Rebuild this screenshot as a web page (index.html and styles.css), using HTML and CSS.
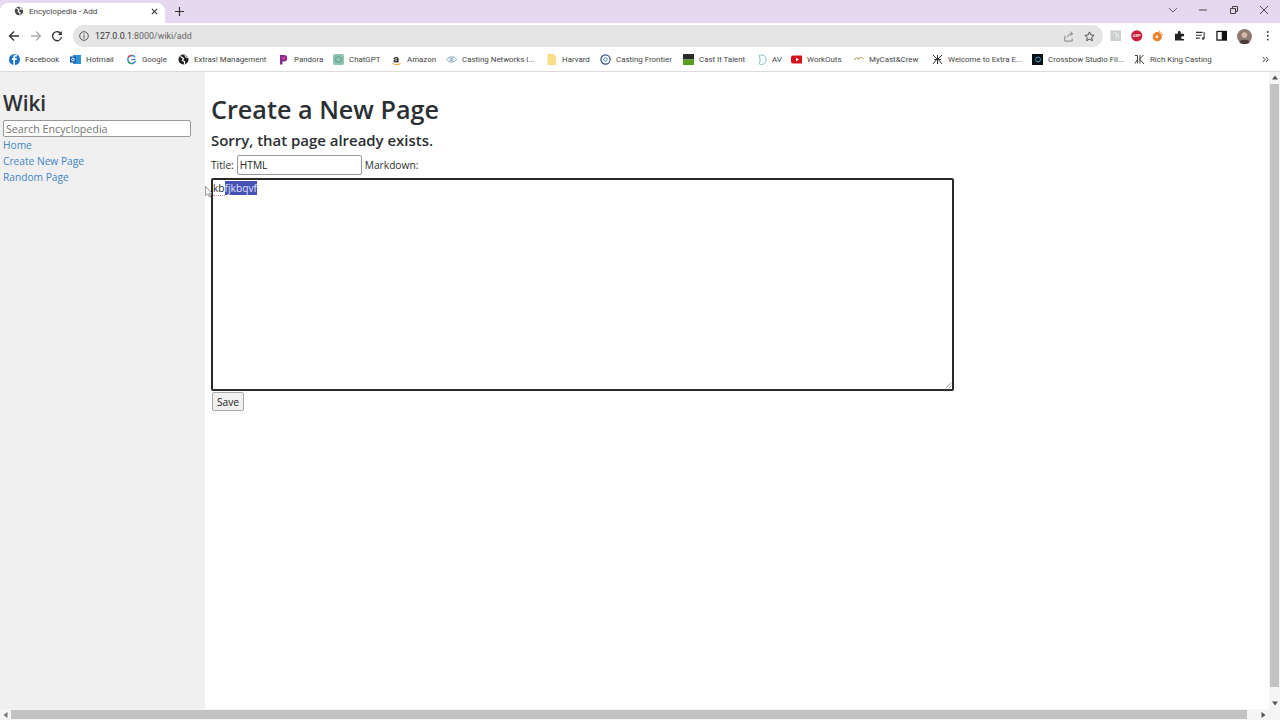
FILE: index.html
```html
<!DOCTYPE html>
<html lang="en">
  <head>
    <meta charset="UTF-8" />
    <title>Encyclopedia - Add</title>
    <link rel="stylesheet" href="styles.css">
  </head>
  <body>
    <div class="tabstrip">
      <div class="tab">
        <svg class="tab-icon" viewBox="0 0 12 12"><circle cx="6" cy="6" r="5" fill="#444"/><path d="M3 2.500l3 2-1 2.500 2 1v2.500M7 1.500l1 2 2.500.5" stroke="#fff" stroke-width="1.400" fill="none"/></svg>
        <span class="tab-title">Encyclopedia - Add</span>
        <svg class="tab-close" viewBox="0 0 8 8"><path d="M1 1l6 6M7 1l-6 6" stroke="#333" stroke-width="1.200"/></svg>
      </div>
      <svg class="new-tab" viewBox="0 0 10 10"><path d="M5 0v10M0 5h10" stroke="#333" stroke-width="1.300"/></svg>
      <div class="window-controls">
        <svg viewBox="0 0 10 10"><path d="M1 3l4 4 4-4" stroke="#666" fill="none"/></svg>
        <svg viewBox="0 0 10 10"><path d="M1 5h8" stroke="#444"/></svg>
        <svg viewBox="0 0 10 10"><path d="M1.500 3.500h5v5h-5zM3.500 3.500v-2h5v5h-2" stroke="#444" fill="none"/></svg>
        <svg viewBox="0 0 10 10"><path d="M1 1l8 8M9 1l-8 8" stroke="#444"/></svg>
      </div>
    </div>

    <div class="toolbar">
      <svg class="nav-icon" viewBox="0 0 12 12"><path d="M11 6H2M6 1.500L1.500 6 6 10.500" stroke="#333" stroke-width="1.300" fill="none"/></svg>
      <svg class="nav-icon" viewBox="0 0 12 12"><path d="M1 6h9M6 1.500L10.500 6 6 10.500" stroke="#aaa" stroke-width="1.300" fill="none"/></svg>
      <svg class="nav-icon" viewBox="0 0 12 12"><path d="M10 4a4.500 4.500 0 1 0 .5 3" stroke="#333" stroke-width="1.300" fill="none"/><path d="M10.800 1v4h-4z" fill="#333"/></svg>
      <div class="omnibox">
        <svg class="info-icon" viewBox="0 0 10 10"><circle cx="5" cy="5" r="4.300" stroke="#555" fill="none"/><path d="M5 4.300V7.500M5 2.300v1.200" stroke="#555"/></svg>
        <span class="url">127.0.0.1<span class="url-dim">:8000/wiki/add</span></span>
        <svg class="omni-icon share" viewBox="0 0 12 12"><path d="M2 5v6h8V8M5 7c0-2.500 2-4 5-4M8 .8L10.500 3 8 5.300" stroke="#777" fill="none"/></svg>
        <svg class="omni-icon" viewBox="0 0 12 12"><path d="M6 1l1.500 3.300 3.500.4-2.600 2.400.7 3.500L6 8.800l-3.100 1.800.7-3.500L1 4.700l3.500-.4z" stroke="#444" fill="none"/></svg>
      </div>
      <div class="extensions">
        <svg viewBox="0 0 12 12"><rect width="11" height="11" x=".5" y=".5" fill="#c9cfcf"/><path d="M3.500 3h3v6M6.500 5h2.500v4" stroke="#eee" fill="none"/></svg>
        <svg viewBox="0 0 12 12"><circle cx="6" cy="6" r="5.800" fill="#c8203f"/><text class="abp" x="6" y="7.500">ABP</text></svg>
        <svg viewBox="0 0 12 12"><circle cx="5.500" cy="7" r="4.800" fill="#e8812c"/><path d="M7.500 .8l.5 1.700M10 1.800L9 3.200M11.500 4.500L9.800 4.800" stroke="#e8903c"/><circle cx="5" cy="7" r="1.600" fill="#fbe3c8"/></svg>
        <svg viewBox="0 0 12 12"><path d="M1 4h3V2.500a1.500 1.500 0 0 1 3 0V4h3.500v2.500H9a1.500 1.500 0 0 0 0 3h1.500V11H1z" fill="#222"/></svg>
        <svg viewBox="0 0 12 12"><path d="M1 2.500h7M1 5.500h6M1 8.500h4" stroke="#333" stroke-width="1.100"/><path d="M9.500 2v6.500" stroke="#333" stroke-width="1.100"/><circle cx="8.500" cy="8.800" r="1.300" fill="#333"/></svg>
        <svg viewBox="0 0 12 12"><rect x="1" y="1.500" width="10" height="9" stroke="#111" stroke-width="1.300" fill="#fff"/><rect x="6" y="1.500" width="5" height="9" fill="#111"/></svg>
        <svg class="avatar" viewBox="0 0 16 16"><circle cx="8" cy="8" r="8" fill="#8d7a70"/><circle cx="8" cy="6.500" r="3" fill="#d8b8a6"/><path d="M2.500 14c1-3.500 10-3.500 11 0a8 8 0 0 1-11 0z" fill="#4d3d3a"/></svg>
        <svg viewBox="0 0 12 12"><circle cx="6" cy="2" r="1" fill="#333"/><circle cx="6" cy="6" r="1" fill="#333"/><circle cx="6" cy="10" r="1" fill="#333"/></svg>
      </div>
    </div>

    <div class="bookmarks">
      <a class="bookmark" style="width: 61px"><svg viewBox="0 0 11 11"><circle cx="5.500" cy="5.500" r="5.500" fill="#1b74c5"/><path d="M6 11V6h1.600l.2-1.800H6V3.300c0-.6.300-.9 1-.9h.9V.8H6.500C5 .8 4.300 1.800 4.300 3v1.200H3V6h1.300v5z" fill="#fff"/></svg>Facebook</a>
      <a class="bookmark" style="width: 56px"><svg viewBox="0 0 11 11"><rect x="3" y="1" width="8" height="9" fill="#2d8fd5"/><rect y="2.500" width="6" height="6" fill="#0f5ea8"/><circle cx="3" cy="5.500" r="1.400" stroke="#fff" fill="none"/></svg>Hotmail</a>
      <a class="bookmark" style="width: 52px"><svg viewBox="0 0 11 11"><path d="M9 3A4 4 0 1 0 9.500 7" stroke="#3a7de0" stroke-width="1.400" fill="none"/><path d="M5.500 5.500h4" stroke="#3a7de0" stroke-width="1.400"/><path d="M2 3.300A4 4 0 0 1 5.500 1.500" stroke="#d8503e" stroke-width="1.400" fill="none"/><path d="M2 7.800a4 4 0 0 0 4 1.700" stroke="#3fa85a" stroke-width="1.400" fill="none"/></svg>Google</a>
      <a class="bookmark" style="width: 100px"><svg viewBox="0 0 11 11"><circle cx="5.500" cy="5.500" r="5" fill="#222"/><path d="M2.500 2.500l3 2-1 2 2 1v2.500M7 1l1 2 2 .5" stroke="#fff" stroke-width="1.200" fill="none"/></svg>Extras! Management</a>
      <a class="bookmark" style="width: 55px"><svg viewBox="0 0 11 11"><path d="M2 1h4a3.200 3.200 0 0 1 0 6.500H4.500V10.500H2z" fill="#8a2c8f"/><path d="M4.500 3h1.300a1.200 1.200 0 0 1 0 2.500H4.500z" fill="#d44aa0"/></svg>Pandora</a>
      <a class="bookmark" style="width: 58px"><svg viewBox="0 0 11 11"><rect width="11" height="11" rx="2" fill="#8fc4b0"/><circle cx="5.500" cy="5.500" r="3" stroke="#5e9e88" fill="none"/></svg>ChatGPT</a>
      <a class="bookmark" style="width: 55px"><svg viewBox="0 0 11 11"><path d="M3 5c1-2 4-1.500 4 0v3.500M7 5.500C4 5.500 3 6 3 7s2 1.500 4 0" stroke="#222" stroke-width="1.200" fill="none"/><path d="M1.500 9.500c2.500 1.400 6 1.400 8 0" stroke="#e89a20" fill="none"/></svg>Amazon</a>
      <a class="bookmark" style="width: 100px"><svg viewBox="0 0 11 11"><path d="M.5 5.500C3 2 8 2 10.500 5.500 8 9 3 9 .5 5.500z" stroke="#7fa7bb" fill="none"/><circle cx="5.500" cy="5.500" r="2" fill="#a6c2cf"/></svg>Casting Networks l...</a>
      <a class="bookmark" style="width: 54px"><svg viewBox="0 0 11 11"><path d="M1.500 0h6L10 2.500V11H1.500z" fill="#f8de88"/></svg>Harvard</a>
      <a class="bookmark" style="width: 83px"><svg viewBox="0 0 11 11"><circle cx="5.500" cy="5.500" r="4.600" stroke="#35517f" stroke-width="1.200" fill="#fff"/><circle cx="5.500" cy="5.500" r="1.800" stroke="#5a8ab8" fill="none"/></svg>Casting Frontier</a>
      <a class="bookmark" style="width: 73px"><svg viewBox="0 0 11 11"><rect width="11" height="5.500" fill="#2b2b2b"/><rect y="5.500" width="11" height="5.500" fill="#5a9e20"/></svg>Cast It Talent</a>
      <a class="bookmark" style="width: 35px"><svg viewBox="0 0 11 11"><path d="M3 1.500c4-1.500 8 1 7 5s-5 5-7 3c1.500-2 1.500-5 0-8z" stroke="#7cc0c0" fill="none"/></svg>AV</a>
      <a class="bookmark" style="width: 62px"><svg viewBox="0 0 11 11"><rect y="1.500" width="12" height="8" rx="2" fill="#d4121c"/><path d="M5 3.700l3 1.800-3 1.800z" fill="#fff"/></svg>WorkOuts</a>
      <a class="bookmark" style="width: 79px"><svg viewBox="0 0 11 11"><path d="M1 6c2-3 4-3 5 0M5 5c2-2 4-2 5.500 0" stroke="#b8a060" stroke-width="1.200" fill="none"/></svg>MyCast&amp;Crew</a>
      <a class="bookmark" style="width: 100px"><svg viewBox="0 0 11 11"><path d="M1 1l4 4-4 5M10 1L6 5l4 5M2 5.500h7M5.500 1v9" stroke="#333" fill="none"/></svg>Welcome to Extra E...</a>
      <a class="bookmark" style="width: 102px"><svg viewBox="0 0 11 11"><rect width="11" height="11" fill="#0a0f14"/><circle cx="6" cy="5.500" r="2.500" stroke="#3aa0c0" fill="none"/></svg>Crossbow Studio Fil...</a>
      <a class="bookmark" style="width: 77px"><svg viewBox="0 0 11 11"><path d="M1 1.500h2.500v8M3.500 5.500L1 9.500M9.500 1L5.500 5l4.500 5M6 1v8.500" stroke="#444" fill="none"/></svg>Rich King Casting</a>
      <svg class="more" viewBox="0 0 8 8"><path d="M1 1l2.500 3L1 7M4.500 1L7 4 4.500 7" stroke="#333" fill="none"/></svg>
    </div>

    <div class="viewport">
      <div class="sidebar">
        <h2>Wiki</h2>
        <input class="search" type="text" placeholder="Search Encyclopedia">
        <div><a href="#">Home</a></div>
        <div><a href="#">Create New Page</a></div>
        <div><a href="#">Random Page</a></div>
      </div>
      <div class="main">
        <h1>Create a New Page</h1>
        <h3>Sorry, that page already exists.</h3>
        <div class="title-row">
          <label>Title:</label>
          <input class="title-input" type="text" value="HTML">
          <label>Markdown:</label>
        </div>
        <div class="editor">
          <span class="misspelt">kb</span><span class="selected">fjkbqvf</span>
          <svg class="grip" viewBox="0 0 10 10"><path d="M9 2L2 9M9 6L6 9" stroke="#888"/></svg>
        </div>
        <button class="save">Save</button>
      </div>
      <div class="vscroll">
        <svg viewBox="0 0 8 8"><path d="M4 2l3 4H1z" fill="#555"/></svg>
        <div class="vthumb"></div>
        <svg viewBox="0 0 8 8"><path d="M4 6L1 2h6z" fill="#555"/></svg>
      </div>
    </div>
    <div class="hscroll">
      <svg viewBox="0 0 8 8"><path d="M2 4l4-3v6z" fill="#777"/></svg>
      <div class="hthumb"></div>
      <svg class="hscroll-right" viewBox="0 0 8 8"><path d="M6 4L2 1v6z" fill="#555"/></svg>
    </div>

    <svg class="cursor" viewBox="0 0 9 14"><path d="M.5.500v11l2.800-2.500 1.700 4 1.500-.6-1.700-3.900h3.500z" fill="#fff" stroke="#555" stroke-width=".7"/></svg>
  </body>
</html>
```

FILE: styles.css
```css
* {
  box-sizing: border-box;
  padding: 0;
  margin: 0;
}

body {
  width: 1280px;
  height: 720px;
  overflow: hidden;
  display: flex;
  flex-direction: column;
  font-family: 'Open Sans', sans-serif;
  color: #2b2f33;
  background: white;
}

/* browser chrome */
.tabstrip {
  height: 23px;
  display: flex;
  align-items: flex-end;
  background-color: #e6d8ee;
}

.tab {
  width: 165px;
  height: 20px;
  display: flex;
  align-items: center;
  padding: 0 7px 4px 14px;
  background-color: white;
  border-radius: 8px 8px 0 0;
}

.tab-icon {
  width: 10px;
  height: 10px;
}

.tab-title {
  margin-left: 5px;
  flex: 1;
  font-size: 8.100px;
  color: #444;
  font-family: 'Roboto', sans-serif;
}

.tab-close {
  width: 7px;
  height: 7px;
}

.new-tab {
  width: 9px;
  height: 9px;
  margin: 0 0 7px 10px;
}

.window-controls {
  margin-left: auto;
  display: flex;
  gap: 20.500px;
  padding: 0 11px 8px 0;
}

.window-controls svg {
  width: 10px;
  height: 10px;
}

.toolbar {
  height: 25px;
  display: flex;
  align-items: center;
  padding: 1px 0 0 8px;
  background-color: white;
}

.nav-icon {
  width: 12px;
  height: 12px;
  margin-right: 9.500px;
}

.omnibox {
  width: 1030px;
  height: 22px;
  margin-left: 0.500px;
  display: flex;
  align-items: center;
  padding: 0 8px 0 6px;
  background-color: #e5e5e5;
  border-radius: 11px;
}

.info-icon {
  width: 10px;
  height: 10px;
}

.url {
  margin-left: 6px;
  flex: 1;
  font-size: 8.900px;
  color: #333;
  font-family: 'Roboto', sans-serif;
}

.url-dim {
  color: #666;
}

.omni-icon {
  width: 11px;
  height: 11px;
  margin-left: 10px;
}

.extensions {
  display: flex;
  align-items: center;
  gap: 9.700px;
  margin-left: 7px;
}

.extensions svg {
  width: 11.500px;
  height: 11.500px;
}

.extensions .avatar {
  width: 15px;
  height: 15px;
}

.abp {
  font-family: 'Roboto', sans-serif;
  font-size: 4.200px;
  font-weight: 700;
  fill: #fbdde3;
  text-anchor: middle;
}

.bookmarks {
  height: 24px;
  display: flex;
  align-items: center;
  padding: 0 0 1px 9px;
  border-bottom: 1px solid #dcdcdc;
  background-color: white;
}

.bookmark {
  flex: none;
  display: flex;
  align-items: center;
  gap: 5px;
  font-size: 7.900px;
  white-space: nowrap;
  color: #444;
  font-family: 'Roboto', sans-serif;
}

.bookmark svg {
  width: 11px;
  height: 11px;
  flex: none;
}

.more {
  width: 7px;
  height: 7px;
  margin-left: auto;
  margin-right: 11px;
}

/* page */
.viewport {
  flex: 1;
  min-height: 0;
  display: flex;
}

.sidebar {
  width: 205px;
  padding: 18px 3px 0;
  background-color: #f0f0f0;
  font-size: 10.200px;
}

.sidebar h2 {
  font-size: 20.800px;
  font-weight: 600;
  line-height: 26px;
  margin-bottom: 4px;
}

.sidebar div {
  height: 16px;
  line-height: 16px;
}

.sidebar a {
  color: #4385c5;
  text-decoration: none;
}

.search {
  display: block;
  width: 188px;
  height: 17px;
  padding: 0 2px;
  border: 1px solid #999;
  border-radius: 2px;
  background: white;
  font: inherit;
  font-size: 10.700px;
}

.search::placeholder {
  color: #757575;
  opacity: 1;
}

.main {
  flex: 1;
  padding: 21px 0 0 6px;
  font-size: 10.200px;
}

.main h1 {
  font-size: 25.200px;
  font-weight: 600;
  line-height: 33px;
}

.main h3 {
  margin-top: 5px;
  font-size: 14.950px;
  font-weight: 600;
  line-height: 19px;
}

.title-row {
  display: flex;
  align-items: center;
  gap: 3px;
  height: 20px;
  margin-top: 5px;
}

.title-input {
  width: 125px;
  height: 20px;
  padding: 0 2px;
  border: 1px solid #999;
  border-radius: 2px;
  font: inherit;
  color: #222;
}

.editor {
  position: relative;
  width: 743px;
  height: 213px;
  margin-top: 3px;
  padding: 1px 0;
  border: 2px solid #2a2a2a;
  border-radius: 2px;
  line-height: 14px;
}

.misspelt {
  border-bottom: 1px dotted #d98a8a;
}

.selected {
  background-color: #4651b8;
  color: #dfe4f5;
  display: inline-block;
}

.grip {
  position: absolute;
  right: 0;
  bottom: 0;
  width: 8px;
  height: 8px;
}

.save {
  display: block;
  width: 32px;
  height: 19px;
  margin: 1px 0 0 1px;
  border: 1px solid #aaa;
  border-radius: 2px;
  background-color: #f0f0f0;
  font: inherit;
  color: #222;
}

.vscroll {
  width: 11px;
  display: flex;
  flex-direction: column;
  align-items: center;
  background-color: #f5f5f5;
}

.vscroll svg {
  flex: none;
  width: 8px;
  height: 11px;
}

.vthumb {
  flex: 1;
  width: 9px;
  margin: 1px 0 11px;
  background-color: #c2c2c2;
}

.hscroll {
  height: 11px;
  display: flex;
  align-items: center;
  background-color: #f5f5f5;
}

.hscroll svg {
  flex: none;
  width: 11px;
  height: 8px;
}

.hthumb {
  flex: none;
  width: 1236px;
  height: 9px;
  background-color: #c2c2c2;
}

.hscroll svg.hscroll-right {
  margin-left: auto;
  margin-right: 11px;
}

.cursor {
  position: absolute;
  left: 205px;
  top: 186px;
  width: 8px;
  height: 12px;
}
```
